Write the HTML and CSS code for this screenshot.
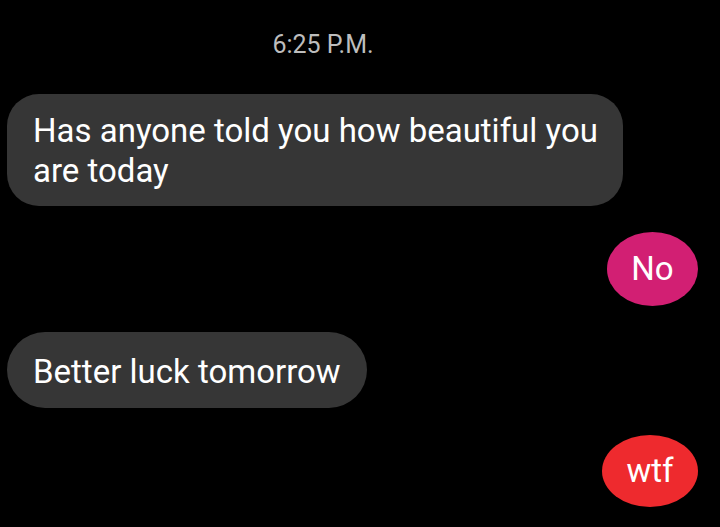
FILE: index.html
```html
<!DOCTYPE html>
<html lang="en">
<head>
  <meta charset="UTF-8">
  <title>Messages</title>
  <link rel="stylesheet" href="styles.css">
</head>
<body>
  <div class="thread">
    <p class="time">6:25 P.M.</p>

    <div class="row in first">
      <div class="bubble received wide">Has anyone told you how beautiful you are today</div>
    </div>

    <div class="row out">
      <div class="bubble sent pink">No</div>
    </div>

    <div class="row in">
      <div class="bubble received">Better luck tomorrow</div>
    </div>

    <div class="row out">
      <div class="bubble sent red">wtf</div>
    </div>
  </div>
</body>
</html>
```

FILE: styles.css
```css
body {
  margin: 0;
  background: #000;
  font-family: Roboto, 'Noto Sans', sans-serif;
  color: #fff;
  height: 527px;
  overflow: hidden;
}
.thread {
  padding: 0 22px 0 7px;
}
.time {
  margin: 0;
  padding-top: 30px;
  width: 632px;
  text-align: center;
  color: #bdbdbd;
  font-size: 25px;
  line-height: 30px;
}
.row {
  display: flex;
  margin-top: 26px;
}
.row.first {
  margin-top: 34px;
}
.row.out {
  justify-content: flex-end;
}
.bubble {
  font-size: 33px;
  line-height: 40px;
}
.received {
  background: #363636;
  border-radius: 38px;
  padding: 20px 26px 16px 26px;
}
.wide {
  width: 570px;
  border-radius: 32px;
  padding: 17px 20px 15px 26px;
}
.sent {
  height: 74px;
  box-sizing: border-box;
  display: flex;
  align-items: center;
  justify-content: center;
  border-radius: 50%;
}
.pink {
  background: #d21f73;
  width: 91px;
}
.red {
  background: #ee2a2e;
  width: 96px;
  height: 72px;
  margin-top: 1px;
}
```
